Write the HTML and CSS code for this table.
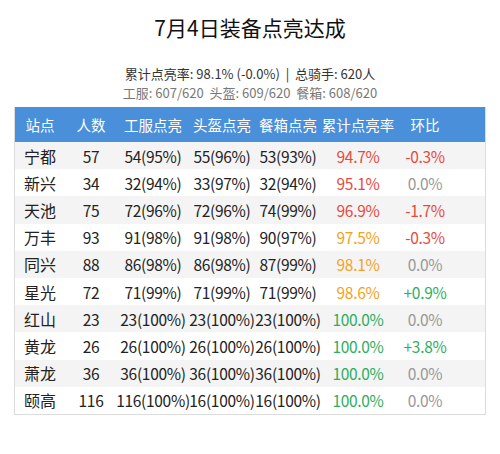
FILE: index.html
```html
<!DOCTYPE html>
<html lang="zh-CN">

<head>
  <meta charset="UTF-8" />
  <meta name="viewport" content="width=device-width, initial-scale=1.0" />
  <title>7月4日装备点亮达成</title>
  <link rel="stylesheet" href="styles.css">
</head>

<body>
  <div class="page">
    <div class="title">7月4日装备点亮达成</div>

    <div class="summary">
      <div class="summary-main">累计点亮率: 98.1% (-0.0%) &nbsp;| &nbsp;总骑手: 620人</div>
      <div class="summary-sub">工服: 607/620 &nbsp;头盔: 609/620 &nbsp;餐箱: 608/620</div>
    </div>

    <div class="table">
      <div class="row head">
        <div class="cell">站点</div>
        <div class="cell">人数</div>
        <div class="cell">工服点亮</div>
        <div class="cell">头盔点亮</div>
        <div class="cell">餐箱点亮</div>
        <div class="cell">累计点亮率</div>
        <div class="cell">环比</div>
      </div>
      <div id="rows"></div>
    </div>
  </div>

  <script>
    const data = [
      ['宁都', 57, '54(95%)', '55(96%)', '53(93%)', '94.7%', 'red', '-0.3%', 'red'],
      ['新兴', 34, '32(94%)', '33(97%)', '32(94%)', '95.1%', 'red', '0.0%', 'grey'],
      ['天池', 75, '72(96%)', '72(96%)', '74(99%)', '96.9%', 'red', '-1.7%', 'red'],
      ['万丰', 93, '91(98%)', '91(98%)', '90(97%)', '97.5%', 'orange', '-0.3%', 'red'],
      ['同兴', 88, '86(98%)', '86(98%)', '87(99%)', '98.1%', 'orange', '0.0%', 'grey'],
      ['星光', 72, '71(99%)', '71(99%)', '71(99%)', '98.6%', 'orange', '+0.9%', 'green'],
      ['红山', 23, '23(100%)', '23(100%)', '23(100%)', '100.0%', 'green', '0.0%', 'grey'],
      ['黄龙', 26, '26(100%)', '26(100%)', '26(100%)', '100.0%', 'green', '+3.8%', 'green'],
      ['萧龙', 36, '36(100%)', '36(100%)', '36(100%)', '100.0%', 'green', '0.0%', 'grey'],
      ['颐高', 116, '116(100%)', '16(100%)', '16(100%)', '100.0%', 'green', '0.0%', 'grey']
    ];

    const rows = document.getElementById('rows');
    data.forEach(d => {
      const row = document.createElement('div');
      row.className = 'row';
      row.innerHTML = `
        <div class="cell">${d[0]}</div>
        <div class="cell num">${d[1]}</div>
        <div class="cell num">${d[2]}</div>
        <div class="cell num">${d[3]}</div>
        <div class="cell num">${d[4]}</div>
        <div class="cell num ${d[6]}">${d[5]}</div>
        <div class="cell num ${d[8]}">${d[7]}</div>`;
      rows.appendChild(row);
    });
  </script>
</body>

</html>
```

FILE: styles.css
```css
body {
  margin: 0;
  background-color: #fff;
  font-family: "Noto Sans CJK SC", "Noto Sans", sans-serif;
  color: #222;
}

.page {
  width: 500px;
  padding-top: 11px;
}

.title {
  text-align: center;
  font-size: 21px;
  line-height: 32px;
  color: #111;
}

.summary {
  margin-top: 21px;
  text-align: center;
  font-size: 13px;
  line-height: 19px;
}

.summary-main {
  color: #333;
}

.summary-sub {
  color: #777;
}

.table {
  margin: 5px 14px 0 14px;
  border: 1px solid #dcdcdc;
  border-top: none;
}

.row {
  display: grid;
  grid-template-columns: 50px 52px 72px 66px 66px 74px 60px 1fr;
  height: 27.2px;
  font-size: 16px;
}

.row.head {
  height: 35px;
  background-color: #4a8fd9;
  color: #fff;
  font-size: 14.5px;
}

#rows .row:nth-child(odd) {
  background-color: #f4f4f4;
}

.cell {
  display: flex;
  align-items: center;
  justify-content: center;
  white-space: nowrap;
}

.num {
  font-size: 15.5px;
  letter-spacing: -0.3px;
}

.red {
  color: #e8493f;
}

.orange {
  color: #f5a11c;
}

.green {
  color: #2fae5e;
}

.grey {
  color: #999;
}
```
